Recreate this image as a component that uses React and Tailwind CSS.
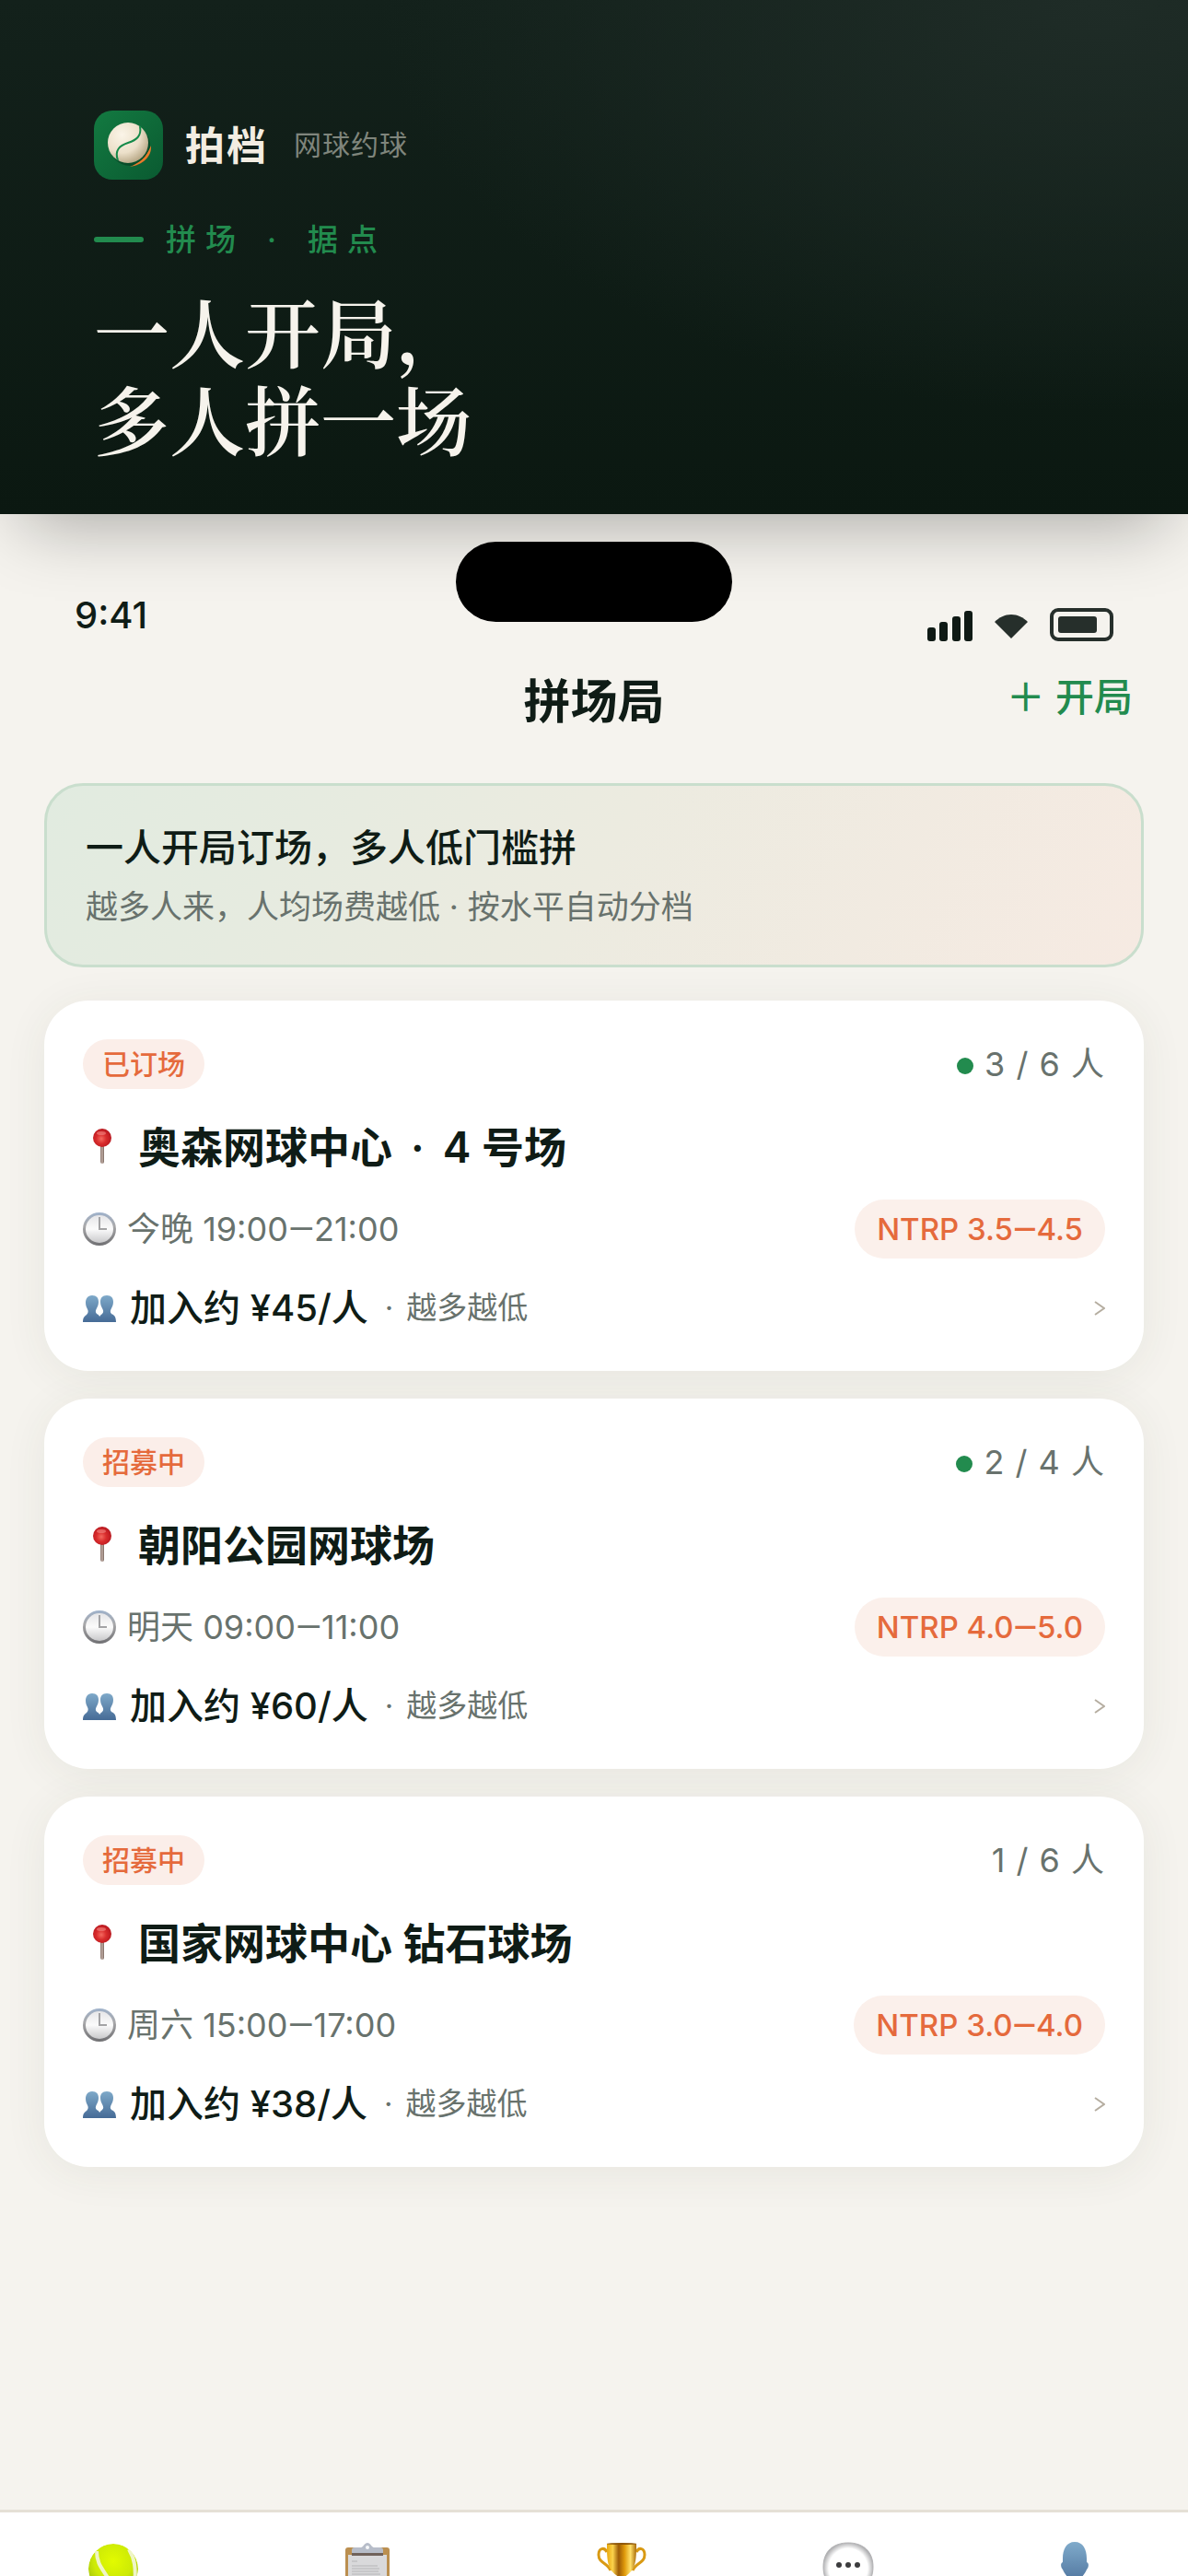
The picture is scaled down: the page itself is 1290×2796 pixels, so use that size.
import React from 'react'

const games = [
    { id: 1, status: '已订场', active: true, count: '3 / 6 人', venue: '奥森网球中心', court: '4 号场', time: ['今晚 19:00', '21:00'], level: ['NTRP 3.5', '4.5'], price: '加入约 ¥45/人' },
    { id: 2, status: '招募中', active: true, count: '2 / 4 人', venue: '朝阳公园网球场', time: ['明天 09:00', '11:00'], level: ['NTRP 4.0', '5.0'], price: '加入约 ¥60/人' },
    { id: 3, status: '招募中', active: false, count: '1 / 6 人', venue: '国家网球中心 钻石球场', time: ['周六 15:00', '17:00'], level: ['NTRP 3.0', '4.0'], price: '加入约 ¥38/人' },
]

const Logo = () => (
    <svg viewBox="0 0 75 75" className="size-[75px]">
        <defs>
            <linearGradient id="logoBg" x1="0" y1="0" x2="1" y2="1">
                <stop offset="0" stopColor="#137a41" />
                <stop offset="1" stopColor="#0a5a31" />
            </linearGradient>
            <radialGradient id="logoBall" cx="0.35" cy="0.3" r="0.75">
                <stop offset="0" stopColor="#fbf5e8" />
                <stop offset="0.6" stopColor="#ece0ca" />
                <stop offset="1" stopColor="#b5a583" />
            </radialGradient>
        </defs>
        <rect width="75" height="75" rx="20" fill="url(#logoBg)" />
        <ellipse cx="39" cy="38" rx="22" ry="22" fill="#06381f" opacity="0.55" />
        <path d="M62 38c1 12-9 21-23 23 10-4 18-10 23-23z" fill="#e8792b" />
        <path d="M60 35c1 12-9 22-20 23 9-4 15-11 20-23z" fill="#0a4f2b" />
        <circle cx="37" cy="35" r="22" fill="url(#logoBall)" />
        <path d="M50 17c2 11-4 15-13 18s-15 8-11 19" fill="none" stroke="#148a49" strokeWidth="2" />
    </svg>
)

const PinIcon = () => (
    <svg viewBox="0 0 42 48" className="w-[42px] h-12">
        <defs>
            <radialGradient id="pinHead" cx="0.45" cy="0.55" r="0.6">
                <stop offset="0" stopColor="#f4695f" />
                <stop offset="0.45" stopColor="#d92c2c" />
                <stop offset="1" stopColor="#b3151d" />
            </radialGradient>
            <linearGradient id="pinNeedle">
                <stop offset="0" stopColor="#8a7770" />
                <stop offset="0.5" stopColor="#c0aca3" />
                <stop offset="1" stopColor="#7a6860" />
            </linearGradient>
        </defs>
        <rect x="19" y="20" width="4" height="22" rx="2" fill="url(#pinNeedle)" />
        <circle cx="21" cy="14" r="10" fill="url(#pinHead)" />
        <ellipse cx="20" cy="9" rx="5" ry="2" fill="#f58a86" opacity="0.6" />
    </svg>
)

const ClockIcon = () => (
    <svg viewBox="0 0 36 36" className="size-9">
        <defs>
            <linearGradient id="clockRim" x1="0" y1="0" x2="0" y2="1">
                <stop offset="0" stopColor="#9fb2cb" />
                <stop offset="0.4" stopColor="#a9a9ab" />
                <stop offset="1" stopColor="#6f6f72" />
            </linearGradient>
            <linearGradient id="clockFace" x1="0" y1="0" x2="0" y2="1">
                <stop offset="0" stopColor="#e6e6e8" />
                <stop offset="0.5" stopColor="#fbfbfb" />
                <stop offset="1" stopColor="#c9c9cb" />
            </linearGradient>
        </defs>
        <circle cx="18" cy="18" r="18" fill="url(#clockRim)" />
        <circle cx="18" cy="18" r="15" fill="url(#clockFace)" />
        <path d="M18 5v13h8" fill="none" stroke="#a3a3a5" strokeWidth="2" />
    </svg>
)

const PeopleIcon = () => (
    <svg viewBox="0 0 36 30" className="w-9 h-[30px]">
        <defs>
            <linearGradient id="people" x1="0" y1="0" x2="0" y2="1">
                <stop offset="0" stopColor="#7ea9c9" />
                <stop offset="1" stopColor="#466b96" />
            </linearGradient>
        </defs>
        <g fill="url(#people)">
            <path d="M10 1c5 0 7 3 7 7 0 3-1 5-2 7s-2 4 0 6c2 1 4 2 4 9H0c0-6 3-7 4-8 2-2 2-4 1-6s-2-4-2-7c0-4 2-8 7-8z" />
            <path d="M26 1c5 0 7 3 7 7 0 3-1 5-2 7s-2 4 0 6c2 1 5 2 5 9H17c0-7 3-8 4-9 2-2 1-4 0-6s-2-4-2-7c0-4 2-7 7-7z" />
        </g>
    </svg>
)

const SignalIcon = () => (
    <svg viewBox="0 0 49 33" className="w-[49px] h-[33px] text-[#0f1a15]" fill="currentColor">
        <rect x="0" y="18" width="9" height="15" rx="3" />
        <rect x="13" y="12" width="9" height="21" rx="3" />
        <rect x="27" y="6" width="9" height="27" rx="3" />
        <rect x="40" y="0" width="9" height="33" rx="3" />
    </svg>
)

const WifiIcon = () => (
    <svg viewBox="0 0 36 26" className="mb-[3px] w-9 h-[26px]">
        <path d="M0 8C5 3 11 0 18 0s13 3 18 8L18 26z" fill="#262f2b" />
    </svg>
)

const tabs = [
    {
        id: 'play',
        label: '约球',
        width: 'flex-1',
        icon: (
            <svg viewBox="0 0 54 60" className="w-[54px] h-[60px]">
                <defs>
                    <radialGradient id="tennis" cx="0.5" cy="0.35" r="0.65">
                        <stop offset="0" stopColor="#e2fb00" />
                        <stop offset="0.6" stopColor="#cdea06" />
                        <stop offset="1" stopColor="#9dbd10" />
                    </radialGradient>
                    <clipPath id="tennisClip"><circle cx="27" cy="29" r="27" /></clipPath>
                </defs>
                <g clipPath="url(#tennisClip)">
                    <circle cx="27" cy="29" r="27" fill="url(#tennis)" />
                    <path d="M9 10c0 16 8 20 16 36M44 8c6 10 8 20 6 40" fill="none" stroke="#eff5c8" strokeWidth="4" />
                </g>
            </svg>
        ),
    },
    {
        id: 'list',
        label: '订单',
        width: 'w-[306px]',
        icon: (
            <svg viewBox="0 0 54 60" className="w-[54px] h-[60px]">
                <rect x="3" y="6" width="48" height="56" rx="3" fill="#bb8f50" />
                <rect x="6" y="14" width="42" height="46" fill="#d9d9db" />
                <path d="M10 21h6M10 26h28M10 29h30M10 32h29M10 35h31M10 38h29M10 41h30M10 44h28" stroke="#b5b5b7" strokeWidth="1" />
                <rect x="10" y="12" width="34" height="3" fill="#70625b" />
                <path d="M10 12V9c0-2 1-3 3-3h7c2 0 4-5 7-5s5 5 7 5h7c2 0 3 1 3 3v3z" fill="#b7bdc9" />
                <circle cx="27" cy="6" r="2" fill="#f7f8fa" />
            </svg>
        ),
    },
    {
        id: 'match',
        label: '赛事',
        width: 'flex-1',
        icon: (
            <svg viewBox="0 0 54 60" className="w-[54px] h-[60px]">
                <defs>
                    <linearGradient id="gold">
                        <stop offset="0" stopColor="#e9a90d" />
                        <stop offset="0.2" stopColor="#fbd24b" />
                        <stop offset="0.4" stopColor="#9c5b06" />
                        <stop offset="0.6" stopColor="#e09a0a" />
                        <stop offset="0.8" stopColor="#ffe06a" />
                        <stop offset="1" stopColor="#a96a08" />
                    </linearGradient>
                </defs>
                <path d="M11 11C8 5 2 7 2 14c0 9 10 9 13 17M43 11c3-6 9-4 9 3 0 9-10 9-13 17" fill="none" stroke="#d99a14" strokeWidth="3" />
                <path d="M11 2h32c0 20-1 27-10 34-3 2-3 5-3 10h-6c0-5 0-8-3-10C12 29 11 22 11 2z" fill="url(#gold)" />
                <ellipse cx="27" cy="2" rx="16" ry="1" fill="#8e5606" />
            </svg>
        ),
    },
    {
        id: 'chat',
        label: '消息',
        width: 'flex-1',
        icon: (
            <svg viewBox="0 0 56 60" className="w-14 h-[60px]">
                <defs>
                    <radialGradient id="bubble" cx="0.5" cy="0.5" r="0.52">
                        <stop offset="0.75" stopColor="#ffffff" />
                        <stop offset="1" stopColor="#a9a9ab" />
                    </radialGradient>
                </defs>
                <path d="M28 1c16 0 27 9 27 26S44 56 28 56 1 44 1 27 12 1 28 1z" fill="url(#bubble)" stroke="#b4b4b6" strokeWidth="1" />
                <g fill="#3c3c3e">
                    <circle cx="18" cy="25" r="3" />
                    <circle cx="28" cy="25" r="3" />
                    <circle cx="38" cy="25" r="3" />
                </g>
            </svg>
        ),
    },
    {
        id: 'me',
        label: '我的',
        width: 'flex-1',
        icon: (
            <svg viewBox="0 0 54 60" className="w-[54px] h-[60px]">
                <defs>
                    <linearGradient id="me" x1="0" y1="0" x2="0" y2="1">
                        <stop offset="0" stopColor="#80abcb" />
                        <stop offset="1" stopColor="#3f628f" />
                    </linearGradient>
                </defs>
                <path d="M27 0c9 0 13 8 13 18v4c3 1 2 6 0 8-1 3-3 5-5 8v8c4 4 17 4 17 14H2c0-10 14-10 17-14v-8c-2-3-4-5-5-8-2-2-3-7 0-8v-4C14 8 18 0 27 0z" fill="url(#me)" />
            </svg>
        ),
    },
]

const Range = ({ value }) => (
    <span>{value[0]}<span className="font-[Roboto] leading-none">—</span>{value[1]}</span>
)

const GameCard = ({ game }) => (
    <article className="bg-white rounded-[48px] p-[42px] shadow-[0_6px_48px_rgba(60,70,40,0.07)]">
        <div className="flex items-center justify-between">
            <span className="px-[21px] rounded-full bg-[#fbeee9] text-[#e56a3c] text-[30px] leading-[54px] font-medium">{game.status}</span>
            <span className="flex items-center gap-3 text-[36px] leading-[54px] text-[#68726d]">
                {game.active && <span className="size-[18px] mt-1 rounded-full bg-[#228b4e]" />}
                <span className="tracking-[1px]">{game.count}</span>
            </span>
        </div>
        <h3 className="mt-[30px] flex items-center text-[46px] leading-[66px] font-semibold text-[#0f1c16]">
            <PinIcon />
            <span className="ml-[18px]">{game.venue}</span>
            {game.court && <><span className="mx-[20px]">·</span><span>{game.court}</span></>}
        </h3>
        <div className="mt-6 flex items-center justify-between">
            <span className="flex items-center gap-3 text-[36px] text-[#68726d]"><ClockIcon /><Range value={game.time} /></span>
            <span className="px-6 rounded-full bg-[#fbf0eb] text-[#e56a3c] text-[33px] leading-[64px] font-medium"><Range value={game.level} /></span>
        </div>
        <div className="mt-7 flex items-center h-[52px]">
            <PeopleIcon />
            <span className="ml-[15px] text-[40px] font-medium text-[#0f1c16]">{game.price}</span>
            <span className="ml-[18px] text-[33px] text-[#68726d]">·</span>
            <span className="ml-[14px] text-[33px] text-[#68726d]">越多越低</span>
            <svg viewBox="0 0 12 16" className="ml-auto w-3 h-4">
                <path d="M1 1l10 7-10 7" fill="none" stroke="#b5ada0" strokeWidth="2" />
            </svg>
        </div>
    </article>
)

const App = () => {
    return (
        <div className="min-h-screen flex flex-col bg-[#f5f3ee] font-[Inter,'Noto_Sans_CJK_SC',sans-serif] text-[#0f1c16]">
            <header className="relative z-10 px-[102px] pt-[120px] pb-[58px] bg-[radial-gradient(ellipse_60%_80%_at_92%_0%,#1f2c27_0%,transparent_100%),linear-gradient(180deg,#13211b,#0b1811)] shadow-[0_36px_72px_-24px_rgba(0,0,0,0.3)]">
                <div className="flex items-center">
                    <Logo />
                    <span className="ml-6 text-[43px] leading-[60px] tracking-[2px] font-semibold text-[#f3ede2]">拍档</span>
                    <span className="ml-7 text-[30px] leading-[45px] tracking-[1px] text-[#7f857c]">网球约球</span>
                </div>
                <div className="mt-[38px] flex items-center text-[33px] leading-[54px] tracking-[10px] font-medium text-[#228b4e]">
                    <span className="w-[54px] h-[6px] rounded-full bg-[#228b4e]" />
                    <span className="ml-6">拼场</span>
                    <span className="mx-6">·</span>
                    <span>据点</span>
                </div>
                <h1 className="mt-[23px] text-[82px] leading-[95px] font-semibold font-['Noto_Serif_CJK_SC','Songti_SC',serif] text-[#f6f3ec]">
                    一人开局，<br />多人拼一场
                </h1>
            </header>

            <div className="flex items-start justify-between px-[81px] pt-[30px]">
                <span className="w-[300px] pt-[54px] text-[40px] leading-[52px] font-medium">9:41</span>
                <span className="relative z-20 w-[300px] h-[87px] rounded-full bg-black" />
                <span className="w-[300px] pt-[72px] flex items-end justify-end gap-6">
                    <SignalIcon />
                    <WifiIcon />
                    <span className="w-[69px] h-9 rounded-[9px] border-4 border-[#262f2b] p-[5px]">
                        <span className="block w-[42px] h-[18px] rounded-[3px] bg-[#262f2b]" />
                    </span>
                </span>
            </div>

            <div className="grid grid-cols-3 items-start px-[60px] pt-[30px]">
                <h2 className="col-start-2 text-center text-[51px] leading-[72px] font-semibold">拼场局</h2>
                <button className="justify-self-end text-[42px] leading-[62px] font-medium text-[#228b4e]">＋ 开局</button>
            </div>

            <main className="flex-1 px-12 pt-[52px] pb-12 flex flex-col">
                <section className="rounded-[42px] border-[3px] border-[#c9decd] bg-[linear-gradient(120deg,#e1ebe0,#ecebe0_50%,#f6eae2)] px-[42px] py-[37px]">
                    <p className="text-[41px] leading-[60px] font-medium">一人开局订场，多人低门槛拼</p>
                    <p className="mt-2 text-[35px] leading-[52px] text-[#68726d]">越多人来，人均场费越低 · 按水平自动分档</p>
                </section>
                <div className="mt-9 flex flex-col gap-[30px]">
                    {games.map((game) => <GameCard key={game.id} game={game} />)}
                </div>
            </main>

            <nav className="h-[72px] overflow-hidden flex items-start bg-white border-t-[3px] border-[#e5e0d6]">
                {tabs.map((tab) => (
                    <button key={tab.id} aria-label={tab.label} className={`${tab.width} pt-8 flex justify-center`}>
                        {tab.icon}
                    </button>
                ))}
            </nav>
        </div>
    )
}

export default App
